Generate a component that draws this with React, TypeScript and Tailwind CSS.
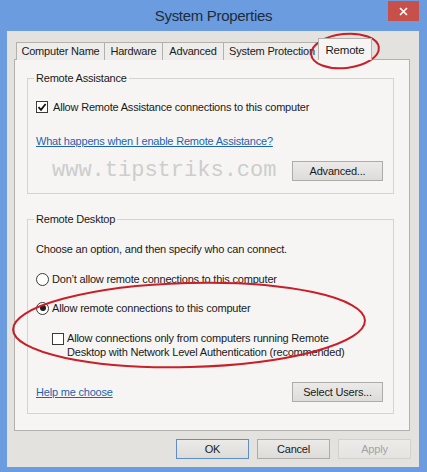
import React from 'react';

const ui = "font-['Liberation_Sans',Arial,sans-serif] text-[11px] tracking-[-0.2px] text-[#1a1a1a]";

function Check({ checked = false }: { checked?: boolean }) {
  return (
    <span className="w-[12px] h-[12px] border border-[#3a3a3a] bg-white flex items-center justify-center shrink-0">
      {checked && (
        <svg width="10" height="10" viewBox="0 0 10 10">
          <path d="M1.5 5.2 L4 7.8 L8.6 2" fill="none" stroke="#111" strokeWidth="1.8" />
        </svg>
      )}
    </span>
  );
}

function Radio({ selected = false }: { selected?: boolean }) {
  return (
    <span className="w-[13px] h-[13px] rounded-full border border-[#3a3a3a] bg-white flex items-center justify-center shrink-0">
      {selected && <span className="w-[6px] h-[6px] rounded-full bg-[#1f1f1f]" />}
    </span>
  );
}

function Btn({ children, className = '' }: { children: React.ReactNode; className?: string }) {
  return (
    <div
      className={`h-[20px] flex items-center justify-center border bg-gradient-to-b from-[#ebeae8] to-[#dedcd9] ${className}`}
    >
      {children}
    </div>
  );
}

function Tab({ label, w }: { label: string; w: string }) {
  return (
    <div
      className={`${w} h-[18px] border-t border-l border-[#b3b1ae] bg-[#eeedeb] flex items-center justify-center overflow-hidden whitespace-nowrap`}
    >
      {label}
    </div>
  );
}

export default function App() {
  return (
    <div className={`relative w-[427px] h-[472px] bg-[#6b9ce0] overflow-hidden ${ui}`}>
      {/* title bar */}
      <div className="h-[31px] flex items-center justify-center">
        <span className="text-[15px] tracking-[-0.3px] text-[#1e2b3c] pt-[1px]">System Properties</span>
      </div>
      <div className="absolute top-[1px] left-[388px] w-[31px] h-[20px] bg-[#c8504b] flex items-center justify-center">
        <svg width="9" height="9" viewBox="0 0 9 9">
          <path d="M1 1 L8 8 M8 1 L1 8" stroke="#fff" strokeWidth="1.6" />
        </svg>
      </div>

      {/* dialog body */}
      <div className="ml-[7px] w-[412px] h-[436px] bg-[#e4e2de] pt-[7px] pl-[7px]">
        {/* tabs */}
        <div className="flex items-end h-[22px] -mb-[1px] ml-[2px]">
          <Tab label="Computer Name" w="w-[88px]" />
          <Tab label="Hardware" w="w-[58px]" />
          <Tab label="Advanced" w="w-[61px]" />
          <Tab label="System Protection" w="w-[97px]" />
          <div className="relative z-10 -ml-[2px] w-[54px] h-[22px] border-t border-l border-r border-[#b3b1ae] bg-[#f6f5f3] flex items-start justify-center pt-[3px] text-[11.5px]">
            Remote
          </div>
        </div>

        {/* tab panel */}
        <div className="w-[396px] h-[372px] border border-[#b3b1ae] bg-[#f6f5f3] pt-[11px] pl-[12px]">
          <fieldset className="w-[367px] h-[123px] border border-[#d6d4d1] pl-[8px] pr-[10px]">
            <legend className="-ml-[2px] px-[2px] leading-[14px]">Remote Assistance</legend>
            <div className="mt-[15px] h-[14px] flex items-center gap-[5px]">
              <Check checked />
              <span>Allow Remote Assistance connections to this computer</span>
            </div>
            <div className="mt-[20px] h-[14px] leading-[14px]">
              <span className="text-[#1f63b0] underline">What happens when I enable Remote Assistance?</span>
            </div>
            <div className="mt-[13px] h-[20px] flex items-center justify-between">
              <span className="ml-[16px] font-['Liberation_Mono',monospace] text-[22px] tracking-normal leading-[20px] text-[#cdcdcd]">
                www.tipstriks.com
              </span>
              <Btn className="w-[91px] border-[#adacaa]">Advanced...</Btn>
            </div>
          </fieldset>

          <fieldset className="mt-[18px] w-[367px] h-[202px] border border-[#d6d4d1] pl-[8px] pr-[10px]">
            <legend className="-ml-[2px] px-[2px] leading-[14px]">Remote Desktop</legend>
            <div className="mt-[16px] h-[14px] leading-[14px]">Choose an option, and then specify who can connect.</div>
            <div className="mt-[16px] h-[14px] flex items-center gap-[3px]">
              <Radio />
              <span>Don’t allow remote connections to this computer</span>
            </div>
            <div className="mt-[15px] h-[14px] flex items-center gap-[3px]">
              <Radio selected />
              <span>Allow remote connections to this computer</span>
            </div>
            <div className="mt-[16px] ml-[16px] flex items-start gap-[3px]">
              <span className="mt-[2px]">
                <Check />
              </span>
              <span className="leading-[14px]">
                Allow connections only from computers running Remote
                <br />
                Desktop with Network Level Authentication (recommended)
              </span>
            </div>
            <div className="mt-[23px] h-[20px] flex items-center justify-between">
              <span className="text-[#1f63b0] underline">Help me choose</span>
              <Btn className="w-[91px] border-[#adacaa]">Select Users...</Btn>
            </div>
          </fieldset>
        </div>

        {/* dialog buttons */}
        <div className="mt-[8px] pr-[8px] flex justify-end gap-[8px]">
          <Btn className="w-[73px] border-[#5c8fc6]">OK</Btn>
          <Btn className="w-[73px] border-[#adacaa]">Cancel</Btn>
          <Btn className="w-[73px] border-[#d3d1ce] text-[#a3a3a3] from-[#ecebe9] to-[#e6e4e1]">Apply</Btn>
        </div>
      </div>

      {/* red annotation ellipses */}
      <svg className="absolute inset-0 pointer-events-none" width="427" height="472" viewBox="0 0 427 472">
        <ellipse cx="345" cy="51" rx="34" ry="17" transform="rotate(-6 345 51)" fill="none" stroke="#c81f28" strokeWidth="2" />
        <ellipse cx="189" cy="325" rx="176" ry="42" transform="rotate(-1.5 189 325)" fill="none" stroke="#c81f28" strokeWidth="2" />
      </svg>
    </div>
  );
}
